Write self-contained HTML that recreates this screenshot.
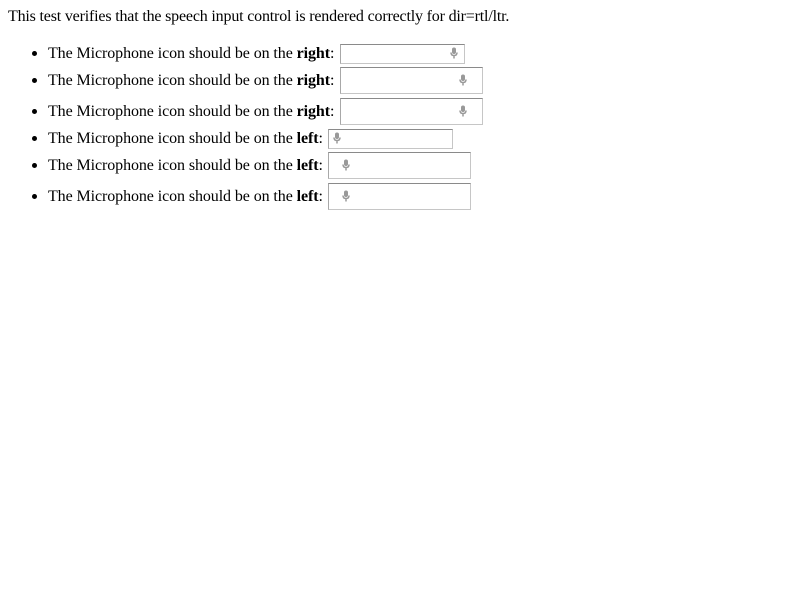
<!DOCTYPE html>
<html><head><style>
body{margin:0;width:800px;height:600px;background:#fff;font-family:"Liberation Serif",serif;font-size:16px;color:#000;position:relative;}
.t{position:absolute;white-space:nowrap;line-height:18px;letter-spacing:-0.09px;}
.b{position:absolute;width:5px;height:5px;border-radius:50%;background:#000;}
.box{position:absolute;box-sizing:border-box;border:1px solid #c6c6c6;border-top-color:#8a8a8a;border-left-color:#a8a8a8;background:#fff;}
</style></head><body>
<div class="t" style="left:8px;top:8px;letter-spacing:-0.18px">This test verifies that the speech input control is rendered correctly for dir=rtl/ltr.</div>

<div class="b" style="left:32px;top:51px"></div>
<div class="t" style="left:48px;top:45px">The Microphone icon should be on the <b>right</b>:</div>
<div class="box" style="left:340px;top:44px;width:125px;height:20px"></div>

<div class="b" style="left:32px;top:78px"></div>
<div class="t" style="left:48px;top:72px">The Microphone icon should be on the <b>right</b>:</div>
<div class="box" style="left:340px;top:67px;width:143px;height:27px"></div>

<div class="b" style="left:32px;top:109px"></div>
<div class="t" style="left:48px;top:103px">The Microphone icon should be on the <b>right</b>:</div>
<div class="box" style="left:340px;top:98px;width:143px;height:27px"></div>

<div class="b" style="left:32px;top:136px"></div>
<div class="t" style="left:48px;top:130px">The Microphone icon should be on the <b>left</b>:</div>
<div class="box" style="left:328px;top:129px;width:125px;height:20px"></div>

<div class="b" style="left:32px;top:163px"></div>
<div class="t" style="left:48px;top:157px">The Microphone icon should be on the <b>left</b>:</div>
<div class="box" style="left:328px;top:152px;width:143px;height:27px"></div>

<div class="b" style="left:32px;top:194px"></div>
<div class="t" style="left:48px;top:188px">The Microphone icon should be on the <b>left</b>:</div>
<div class="box" style="left:328px;top:183px;width:143px;height:27px"></div>

<svg width="800" height="600" style="position:absolute;left:0;top:0">
<defs><g id="mic" fill="none" stroke="#999" stroke-width="1.5">
<rect x="-2" y="-5.5" width="4" height="6.5" rx="2" fill="#999" stroke="none"/>
<path d="M-3 -0.5 Q-3 2.5 0 2.5 Q3 2.5 3 -0.5 M0 2.5 V5.5"/>
</g></defs>
<use href="#mic" x="454" y="53"/>
<use href="#mic" x="463" y="80"/>
<use href="#mic" x="463" y="111"/>
<use href="#mic" x="337" y="138"/>
<use href="#mic" x="346" y="165"/>
<use href="#mic" x="346" y="196"/>
</svg>
</body></html>
